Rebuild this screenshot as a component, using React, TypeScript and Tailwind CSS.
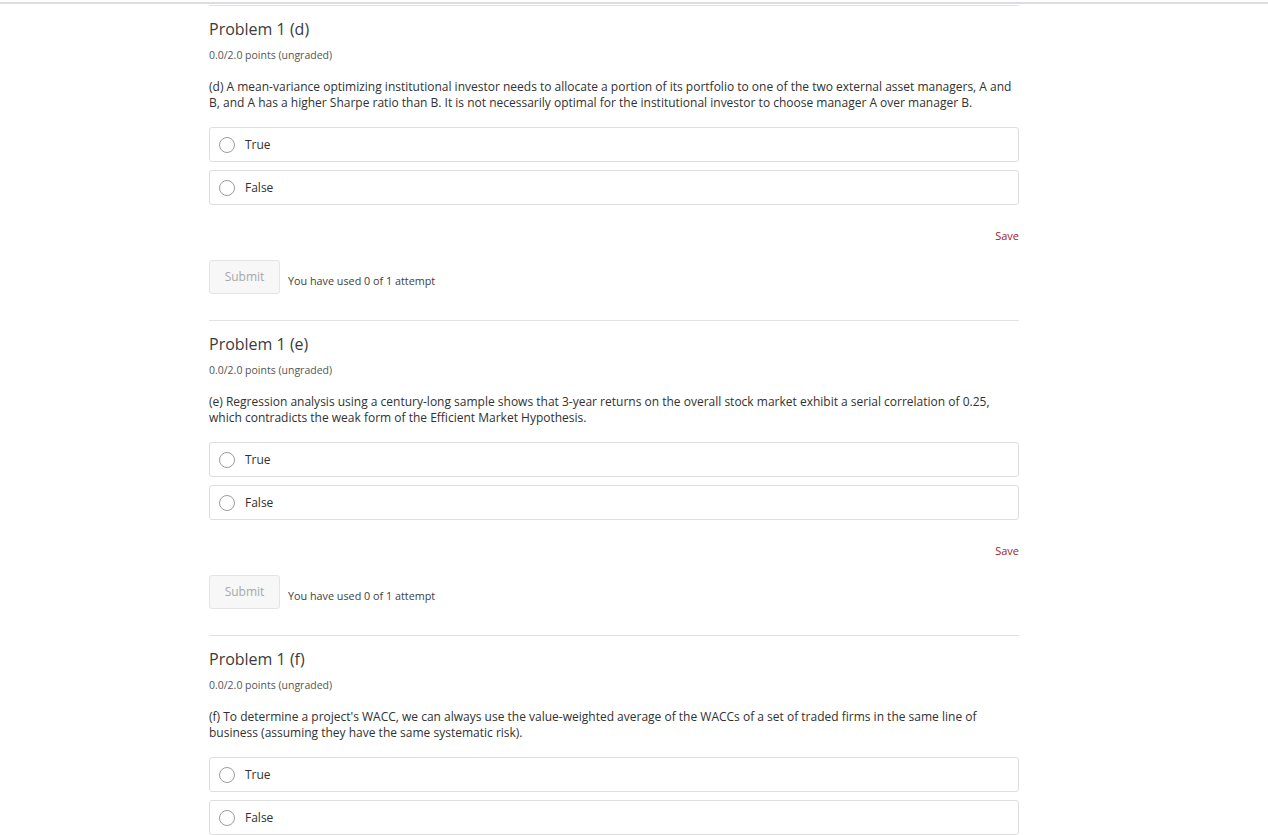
import React from "react";

type Problem = {
  title: string;
  lines: string[];
};

const problems: Problem[] = [
  {
    title: "Problem 1 (d)",
    lines: [
      "(d) A mean-variance optimizing institutional investor needs to allocate a portion of its portfolio to one of the two external asset managers, A and",
      "B, and A has a higher Sharpe ratio than B. It is not necessarily optimal for the institutional investor to choose manager A over manager B.",
    ],
  },
  {
    title: "Problem 1 (e)",
    lines: [
      "(e) Regression analysis using a century-long sample shows that 3-year returns on the overall stock market exhibit a serial correlation of 0.25,",
      "which contradicts the weak form of the Efficient Market Hypothesis.",
    ],
  },
  {
    title: "Problem 1 (f)",
    lines: [
      "(f) To determine a project's WACC, we can always use the value-weighted average of the WACCs of a set of traded firms in the same line of",
      "business (assuming they have the same systematic risk).",
    ],
  },
];

function Option({ label }: { label: string }) {
  return (
    <label className="flex items-center h-[35px] border border-[#dedede] rounded-[3px] pl-[9px] cursor-pointer">
      <span className="w-[16px] h-[16px] rounded-full border border-[#9d9d9d] bg-white shrink-0" />
      <span className="ml-[10px] text-[12px] leading-[16px] text-[#313131]">{label}</span>
    </label>
  );
}

function Section({ p }: { p: Problem }) {
  return (
    <div className="border-t border-[#e2e2e2] pt-[12px] pb-[26px]">
      <h3 className="text-[16px] leading-[22px] text-[#3c3c3c] font-normal">{p.title}</h3>
      <div className="mt-[7px] text-[10.5px] leading-[16px] text-[#555555]">0.0/2.0 points (ungraded)</div>
      <p className="mt-[16px] text-[12px] leading-[16px] text-[#313131] whitespace-nowrap">
        {p.lines[0]}
        <br />
        {p.lines[1]}
      </p>
      <div className="mt-[16px] flex flex-col gap-[8px]">
        <Option label="True" />
        <Option label="False" />
      </div>
      <div className="mt-[23px] flex justify-end">
        <span className="text-[11px] leading-[16px] text-[#a3211f]">Save</span>
      </div>
      <div className="mt-[16px] flex items-start">
        <button className="w-[71px] h-[34px] border border-[#e4e4e4] bg-[#f7f7f7] rounded-[3px] text-[12px] text-[#a8a8a8]">
          Submit
        </button>
        <span className="ml-[8px] mt-[13px] text-[10.8px] leading-[16px] text-[#414141]">
          You have used 0 of 1 attempt
        </span>
      </div>
    </div>
  );
}

export default function App() {
  return (
    <div className="w-[1268px] h-[835px] overflow-hidden bg-white font-['Open_Sans',_'Noto_Sans',_sans-serif]">
      <div className="mt-[2px] h-[2px] bg-[#dcdce2]" />
      <div className="ml-[209px] w-[810px] mt-[1px]">
        {problems.map((p) => (
          <Section key={p.title} p={p} />
        ))}
      </div>
    </div>
  );
}
